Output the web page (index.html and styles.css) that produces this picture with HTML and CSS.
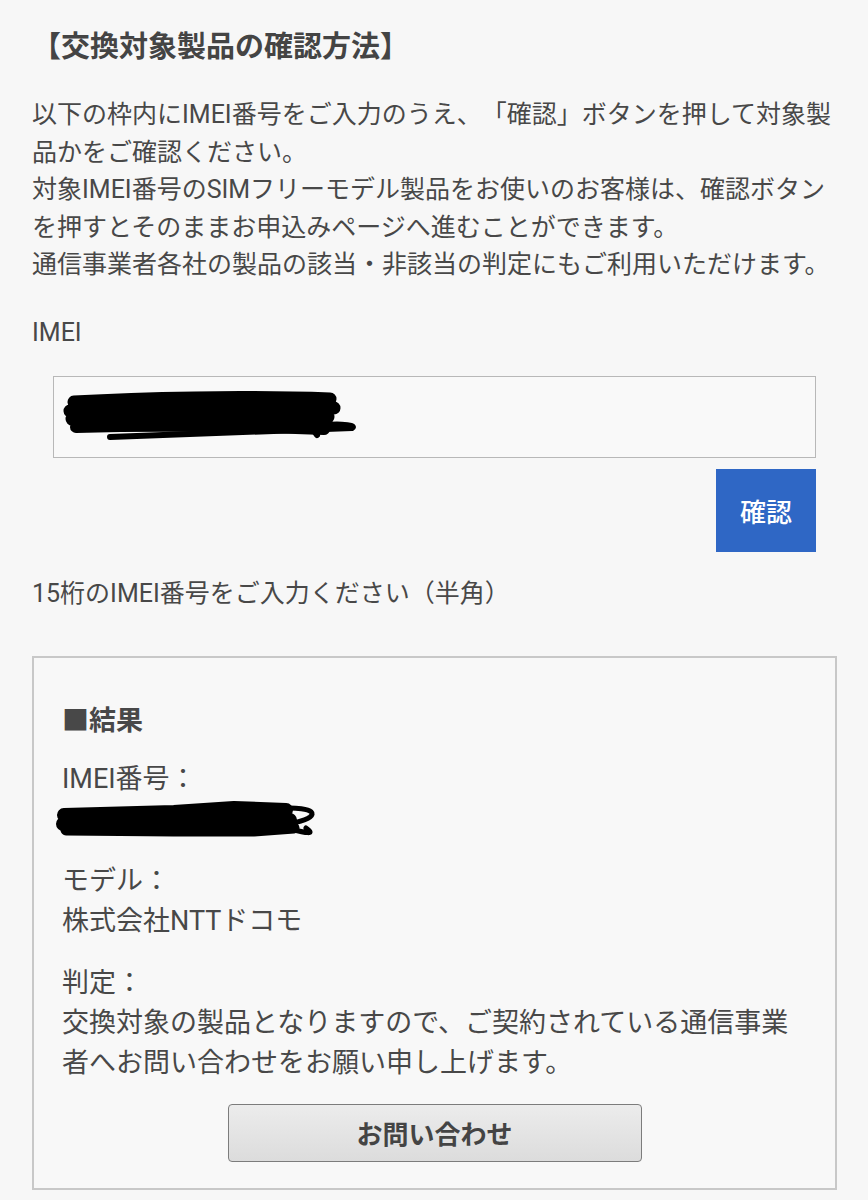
FILE: index.html
```html
<!DOCTYPE html>
<html lang="ja">
  <head>
    <meta charset="UTF-8" />
    <meta name="viewport" content="width=device-width, initial-scale=1.0" />
    <title>交換対象製品の確認方法</title>
    <link rel="stylesheet" href="styles.css">
  </head>
  <body>
    <div class="container">
      <h1>【交換対象製品の確認方法】</h1>
      <p class="intro">
        以下の枠内にIMEI番号をご入力のうえ、「確認」ボタンを押して対象製品かをご確認ください。<br />
        対象IMEI番号のSIMフリーモデル製品をお使いのお客様は、確認ボタンを押すとそのままお申込みページへ進むことができます。<br />
        通信事業者各社の製品の該当・非該当の判定にもご利用いただけます。
      </p>

      <form id="imeiForm">
        <label for="imei">IMEI</label>
        <!-- number was blacked out in the screenshot -->
        <div class="imei-field" id="imei">
          <svg class="redacted" width="300" height="54" viewBox="0 0 300 54">
            <g fill="none" stroke="#000" stroke-linecap="round" stroke-linejoin="round">
              <path stroke-width="13" d="M12 12 C 80 8, 180 6, 268 9" />
              <path stroke-width="13" d="M8 21 C 90 18, 190 16, 272 18" />
              <path stroke-width="13" d="M10 29 C 100 28, 190 26, 266 27" />
              <path stroke-width="12" d="M14 37 C 80 35, 160 35, 262 39" />
              <path stroke-width="6" d="M48 47 C 120 44, 200 41, 290 38 C 296 35, 270 32, 250 38 L 255 45" />
            </g>
          </svg>
        </div>
        <div class="actions">
          <button type="submit" class="confirm-btn">確認</button>
        </div>
      </form>

      <p class="note">15桁のIMEI番号をご入力ください（半角）</p>

      <div class="result">
        <h2>■結果</h2>
        <div class="result-item">
          <p>IMEI番号：</p>
          <svg class="redacted small" width="262" height="40" viewBox="0 0 262 40">
            <g fill="none" stroke="#000" stroke-linecap="round" stroke-linejoin="round">
              <path stroke-width="14" d="M10 16 L 120 13 L 180 9 L 232 11" />
              <path stroke-width="14" d="M9 25 L 110 24 L 200 22 L 236 21" />
              <path stroke-width="11" d="M12 31 L 120 32 L 200 32 L 240 29" />
              <path stroke-width="5" d="M205 12 C 240 6, 266 10, 256 18 C 248 24, 222 26, 236 30 C 252 34, 262 36, 252 29" />
            </g>
          </svg>
        </div>
        <div class="result-item">
          <p>モデル：</p>
          <p>株式会社NTTドコモ</p>
        </div>
        <div class="result-item">
          <p>判定：</p>
          <p>交換対象の製品となりますので、ご契約されている通信事業者へお問い合わせをお願い申し上げます。</p>
        </div>
        <button type="button" class="contact-btn">お問い合わせ</button>
      </div>
    </div>
  </body>
</html>
```

FILE: styles.css
```css
body {
  margin: 0;
  background-color: #f7f7f7;
  color: #484848;
  font-family: Roboto, "Noto Sans CJK JP", sans-serif;
  text-spacing-trim: space-all;
}

.container {
  padding: 26px 31px 0 32px;
}

h1 {
  margin: 0;
  font-size: 29px;
  line-height: 42px;
  font-weight: bold;
  color: #444;
}

.intro {
  margin: 28px 0 0;
  font-size: 25px;
  line-height: 37.5px;
}

label {
  display: block;
  margin-top: 30px;
  font-size: 25px;
  line-height: 37.5px;
}

.imei-field {
  display: flex;
  align-items: center;
  height: 80px;
  margin: 25px 21px 0;
  padding-left: 8px;
  border: 1px solid #b8b8b8;
  background: #f9f9f9;
}

.redacted {
  display: block;
}

.actions {
  display: flex;
  justify-content: flex-end;
  margin-top: 11px;
  padding-right: 21px;
}

.confirm-btn {
  width: 100px;
  height: 83px;
  padding: 0;
  border: none;
  background-color: #2f67c5;
  color: white;
  font-family: inherit;
  font-size: 26px;
  font-weight: 500;
  cursor: pointer;
}

.note {
  margin: 23px 0 0;
  font-size: 25px;
  line-height: 37.5px;
}

.result {
  margin-top: 43px;
  padding: 43px 28px 26px;
  border: 2px solid #c8c8c8;
  background: #f8f8f8;
}

.result h2 {
  margin: 0;
  font-size: 27px;
  line-height: 40px;
  font-weight: bold;
}

.result-item {
  margin-top: 18px;
  font-size: 27px;
  line-height: 40px;
}

.result-item + .result-item {
  margin-top: 22px;
}

.result-item p {
  margin: 0;
}

.redacted.small {
  margin-left: -8px;
}

.contact-btn {
  display: block;
  width: 414px;
  height: 58px;
  margin: 21px auto 0;
  border: 1px solid #7c7c7c;
  border-radius: 4px;
  background: linear-gradient(#ececec, #dcdcdc);
  color: #444;
  font-family: inherit;
  font-size: 26px;
  font-weight: bold;
  cursor: pointer;
}
```
